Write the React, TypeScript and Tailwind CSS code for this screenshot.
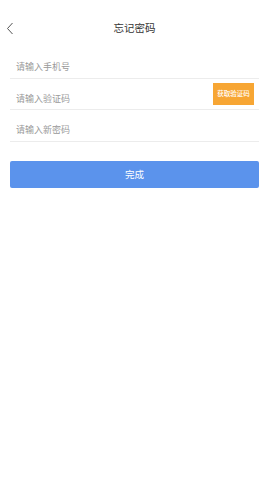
export default function App() {
  return (
    <div
      className="h-[480px] w-[269px] bg-white"
      style={{ fontFamily: '"Noto Sans CJK SC", "Noto Sans", sans-serif' }}
    >
      <header className="relative flex h-[56px] items-center justify-center">
        <svg className="absolute left-[6px] top-[22px]" width="8" height="13" viewBox="0 0 8 13" fill="none">
          <path d="M6.5 1 L1.5 6.5 L6.5 12" stroke="#555" strokeWidth="1" />
        </svg>
        <h1 className="text-[10.5px] text-[#333]">忘记密码</h1>
      </header>

      <div className="mx-[10px] -mt-[9px]">
        <Field placeholder="请输入手机号" />
        <Field placeholder="请输入验证码" action />
        <Field placeholder="请输入新密码" />
      </div>

      <button className="mx-[10px] mt-[19px] flex h-[27px] w-[249px] items-center justify-center rounded-[2px] bg-[#5b93ec] text-[9.5px] text-white">
        完成
      </button>
    </div>
  );
}

function Field({ placeholder, action }: { placeholder: string; action?: boolean }) {
  return (
    <div className="flex h-[31.5px] items-center justify-between border-b border-[#ececec] pl-[6px] pr-[5px]">
      <span className="pt-[9px] text-[9px] text-[#999]">{placeholder}</span>
      {action && (
        <span className="mt-[1px] flex h-[22px] w-[41px] items-center justify-center bg-[#f7a634] text-[6.5px] font-medium text-white">
          获取验证码
        </span>
      )}
    </div>
  );
}
